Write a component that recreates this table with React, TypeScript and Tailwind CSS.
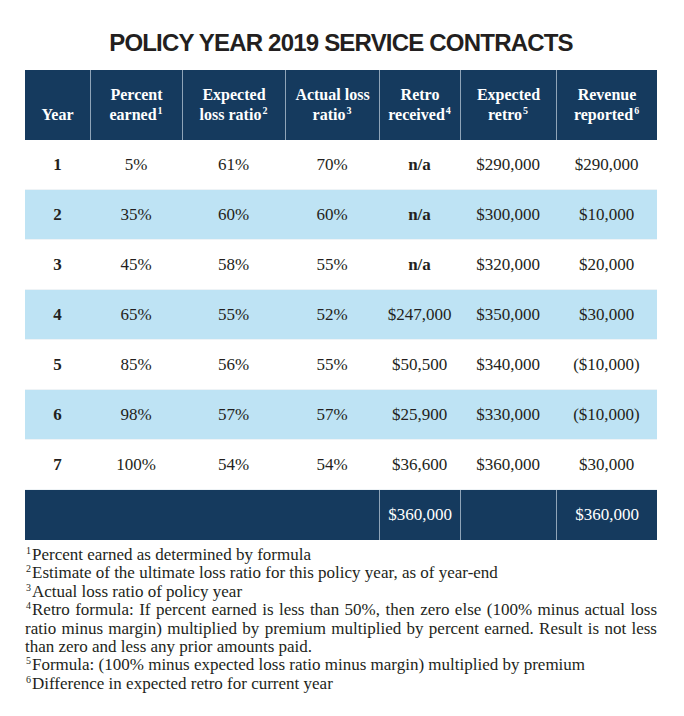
import React from "react";

const rows = [
  ["1", "5%", "61%", "70%", "n/a", "$290,000", "$290,000"],
  ["2", "35%", "60%", "60%", "n/a", "$300,000", "$10,000"],
  ["3", "45%", "58%", "55%", "n/a", "$320,000", "$20,000"],
  ["4", "65%", "55%", "52%", "$247,000", "$350,000", "$30,000"],
  ["5", "85%", "56%", "55%", "$50,500", "$340,000", "($10,000)"],
  ["6", "98%", "57%", "57%", "$25,900", "$330,000", "($10,000)"],
  ["7", "100%", "54%", "54%", "$36,600", "$360,000", "$30,000"],
];

const cols = "grid grid-cols-[65px_92px_103px_94px_81px_96px_101px]";

const Sup = ({ n }: { n: string }) => (
  <sup className="text-[10px] -top-[6px] mx-[1px]">{n}</sup>
);

const headers: [string, string, string][] = [
  ["", "Year", ""],
  ["Percent", "earned", "1"],
  ["Expected", "loss ratio", "2"],
  ["Actual loss", "ratio", "3"],
  ["Retro", "received", "4"],
  ["Expected", "retro", "5"],
  ["Revenue", "reported", "6"],
];

const App = () => {
  return (
    <div className="w-[684px] h-[716px] bg-white pl-[25px] pr-[27px] text-[#231f20] [font-family:'Liberation_Serif',serif]">
      <h1 className="pt-[31px] h-[70px] text-center text-[24px] leading-[24px] font-bold tracking-[-0.8px] [font-family:'Liberation_Sans',sans-serif]">
        POLICY YEAR 2019 SERVICE CONTRACTS
      </h1>

      <div className={`${cols} h-[70px] bg-[#153a5e] text-white`}>
        {headers.map(([a, b, s], i) => (
          <div
            key={i}
            className={`flex flex-col items-center justify-center text-center text-[16px] leading-[20px] font-bold ${
              i > 0 ? "border-l-[1.5px] border-[#8fa4b8]" : ""
            }`}
          >
            {a && <span>{a}</span>}
            <span className={a ? "" : "pt-[20px]"}>
              {b}
              {s && <Sup n={s} />}
            </span>
          </div>
        ))}
      </div>

      {rows.map((r, i) => (
        <div
          key={i}
          className={`${cols} h-[50px] border-b border-[#eef3f6] ${
            i % 2 === 1 ? "bg-[#bee3f4]" : "bg-white"
          }`}
        >
          {r.map((c, j) => (
            <div
              key={j}
              className={`flex items-center justify-center text-[17px] ${
                j === 0 || c === "n/a" ? "font-bold" : ""
              }`}
            >
              {c}
            </div>
          ))}
        </div>
      ))}

      <div className={`${cols} h-[50px] bg-[#153a5e] text-white text-[17px]`}>
        <div className="col-span-4" />
        <div className="flex items-center justify-center border-l-[1.5px] border-[#8fa4b8]">
          $360,000
        </div>
        <div className="border-l-[1.5px] border-[#8fa4b8]" />
        <div className="flex items-center justify-center border-l-[1.5px] border-[#8fa4b8]">
          $360,000
        </div>
      </div>

      <div className="pt-[6px] text-[17px] leading-[18.4px]">
        <p>
          <Sup n="1" />
          Percent earned as determined by formula
        </p>
        <p>
          <Sup n="2" />
          Estimate of the ultimate loss ratio for this policy year, as of year-end
        </p>
        <p>
          <Sup n="3" />
          Actual loss ratio of policy year
        </p>
        <p className="text-justify">
          <span className="block [text-align-last:justify]">
            <Sup n="4" />
            Retro formula: If percent earned is less than 50%, then zero else (100% minus actual loss
          </span>
          <span className="block [text-align-last:justify]">
            ratio minus margin) multiplied by premium multiplied by percent earned. Result is not less
          </span>
          <span className="block">than zero and less any prior amounts paid.</span>
        </p>
        <p>
          <Sup n="5" />
          Formula: (100% minus expected loss ratio minus margin) multiplied by premium
        </p>
        <p>
          <Sup n="6" />
          Difference in expected retro for current year
        </p>
      </div>
    </div>
  );
};

export default App;
